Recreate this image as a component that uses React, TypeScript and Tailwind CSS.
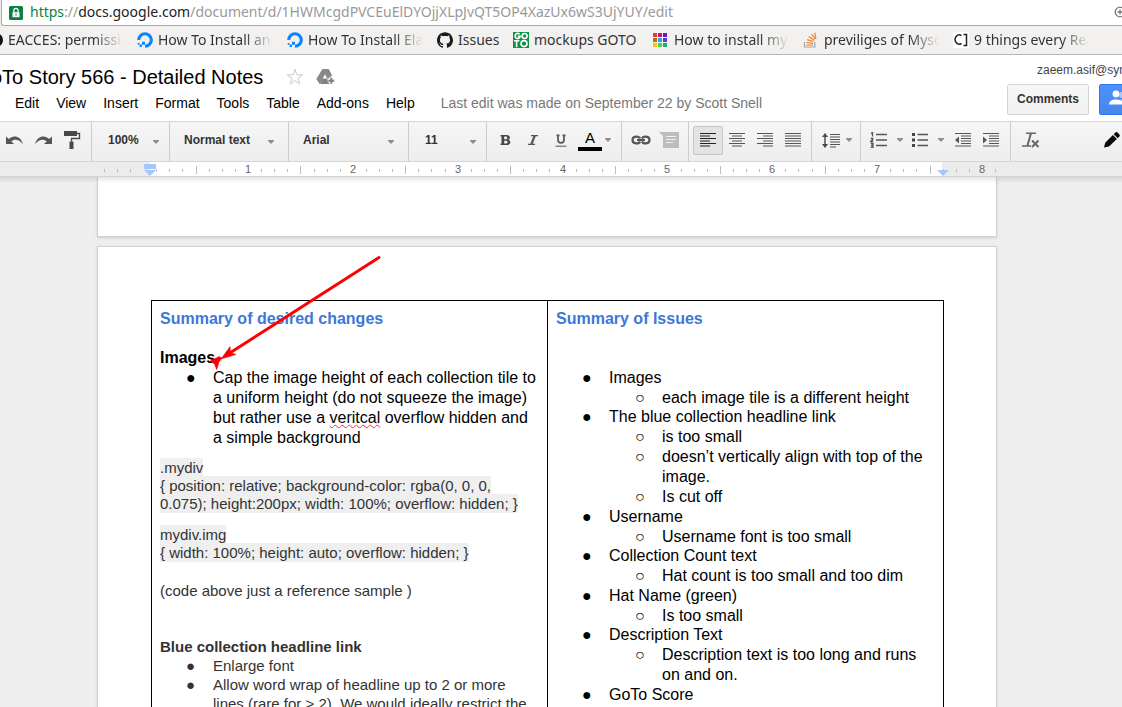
import React, { ReactNode } from "react";
import { SiGithub } from "react-icons/si";

const chromeFont = "font-['Noto_Sans','Open_Sans',sans-serif]";

function Caret() {
  return (
    <svg width="6" height="4" viewBox="0 0 6 4" aria-hidden="true">
      <path d="M0 0h6v1L3 4 0 1z" fill="#8f8f8f" />
    </svg>
  );
}

function OceanIcon() {
  return (
    <svg width="16" height="16" viewBox="0 0 16 16" aria-hidden="true">
      <path d="M1.7 8A6.3 6.3 0 1 1 8 14.3" fill="none" stroke="#0a84ff" strokeWidth="3.1" />
      <path d="M5 9.8h3v3H5zM2.6 12.6h2.3v2.3H2.6zM.7 10.9h1.8v1.8H.7z" fill="#0a84ff" />
    </svg>
  );
}

function GotoIcon() {
  return (
    <svg width="16" height="16" viewBox="0 0 16 16" aria-hidden="true">
      <path d="M0 0h16v16H0z" fill="#0b9444" />
      <g fill="none" stroke="#fff" strokeWidth="1.6">
        <path d="M6.600 2.200A2.600 2.600 0 1 0 7 5.200V4.400H4.800M3.600 8.800v6.400M1 8.800h5.400" />
        <circle cx="11.600" cy="4" r="2.500" />
        <circle cx="11" cy="11.600" r="3" />
      </g>
    </svg>
  );
}

const swatches = ["#e23b3b", "#c9137c", "#7a10c4", "#c56a11", "#2ba3dc", "#4a3fe0", "#fbc314", "#3fd93f", "#0fb572"];

function SwatchIcon() {
  return (
    <svg width="16" height="16" viewBox="0 0 16 16" aria-hidden="true">
      {swatches.map((c, i) => (
        <rect key={c} x={(i % 3) * 5} y={1 + Math.floor(i / 3) * 5} width="4" height="4" fill={c} />
      ))}
    </svg>
  );
}

function StackIcon() {
  return (
    <svg width="16" height="16" viewBox="0 0 16 16" fill="none" aria-hidden="true">
      <path d="M1.500 10v5h10.300v-5" stroke="#a5a6a8" strokeWidth="1.200" />
      <path d="M3.300 13h6.600M3.500 10.500l6.500.8M4.100 7.600l6.300 1.900M5.700 4.500l5.500 3.700M8.400 2l3.900 5.200M11.700.6l1.200 6" stroke="#f48024" strokeWidth="1.200" />
    </svg>
  );
}

function CjIcon() {
  return (
    <svg width="16" height="16" viewBox="0 0 16 16" aria-hidden="true">
      <path d="M0 0h16v16H0z" fill="#fff" />
      <path d="M8.500 3.600A4.200 4.600 0 1 0 8.500 11.500M10.500 2.600h3v10.900h-3" fill="none" stroke="#222" strokeWidth="1.500" />
    </svg>
  );
}

const fade = "w-[115px] [mask-image:linear-gradient(to_right,#000_75%,transparent)]";

function Bookmark({ icon, width, children }: { icon: ReactNode; width: string; children: ReactNode }) {
  return (
    <a href="#" className="flex shrink-0 items-center gap-[5px]">
      {icon}
      <span className={`overflow-hidden whitespace-nowrap ${width}`}>{children}</span>
    </a>
  );
}

function BrowserChrome() {
  return (
    <div className={`shrink-0 text-[#333] ${chromeFont}`}>
      <div className="ml-px flex h-[26px] items-center rounded-bl-[3px] border-b border-l border-[#a9a9a9] bg-white pl-[7px]">
        <svg width="14" height="14" viewBox="0 0 14 14" aria-hidden="true">
          <rect width="14" height="14" rx="1.500" fill="#0b8043" />
          <path d="M3.500 6.200h7v5h-7z" fill="#fff" />
          <path d="M4.900 6.500V4.500a2.100 2.100 0 0 1 4.200 0v2" fill="none" stroke="#fff" strokeWidth="1.300" />
          <path d="M6.500 7.700h1v2h-1z" fill="#0b8043" />
        </svg>
        <p className="ml-[7px] flex-1 overflow-hidden pb-0.5 text-[14px] leading-6 whitespace-nowrap text-[#999]">
          <span className="text-[#0b8043]">https</span>://<span className="text-[#222]">docs.google.com</span>
          /document/d/1HWMcgdPVCEuElDYOjjXLpJvQT5OP4XazUx6wS3UjYUY/edit
        </p>
        <button aria-label="Zoom" className="-mr-1.5 h-6">
          <svg width="14" height="14" viewBox="0 0 14 14" fill="none" stroke="#777" strokeWidth="1.300" aria-hidden="true">
            <circle cx="6" cy="6" r="4.800" />
            <path d="M3.500 6h5M6 3.500v5M9.500 9.500 13 13" />
          </svg>
        </button>
      </div>
      <nav aria-label="Bookmarks" className="flex h-[29px] items-center gap-3.5 overflow-hidden border-b border-[#b6b6b6] bg-[#f2f1f0] text-[14px] leading-6">
        <Bookmark width={fade} icon={
          <svg width="3" height="16" viewBox="0 0 3 16" aria-hidden="true"><circle cx="-4" cy="8" r="7" fill="#111" /></svg>
        }>EACCES: permission</Bookmark>
        <Bookmark width={fade} icon={<OceanIcon />}>How To Install and Use</Bookmark>
        <Bookmark width={fade} icon={<OceanIcon />}>How To Install Elastic</Bookmark>
        <Bookmark width="w-[41px]" icon={<SiGithub size={16} color="#1b1b1b" />}>Issues</Bookmark>
        <Bookmark width="w-[105px]" icon={<GotoIcon />}>mockups GOTO</Bookmark>
        <Bookmark width={fade} icon={<SwatchIcon />}>How to install mysql</Bookmark>
        <Bookmark width={fade} icon={<StackIcon />}>previliges of Mysql</Bookmark>
        <Bookmark width={fade} icon={<CjIcon />}>9 things every React</Bookmark>
      </nav>
    </div>
  );
}

const menus = ["Edit", "View", "Insert", "Format", "Tools", "Table", "Add-ons", "Help"];

function DocHeader() {
  return (
    <header className="flex shrink-0 justify-between overflow-hidden bg-white">
      <div className="h-[66px] whitespace-nowrap">
        <div className="flex h-9 items-end">
          <h1 className="-ml-[9px] text-[20px] leading-7">oTo Story 566 - Detailed Notes</h1>
          <button aria-label="Star" className="mb-[5px] ml-[23px]">
            <svg width="18" height="18" viewBox="0 0 18 18" fill="none" stroke="#ccc" aria-hidden="true">
              <path d="m9 1.200 1.900 5.600h5.900l-4.800 3.500 1.800 5.700L9 12.500 4.200 16 6 10.300 1.200 6.800h5.900z" />
            </svg>
          </button>
          <button aria-label="Add to Drive" className="mb-[5px] ml-3">
            <svg width="20" height="18" viewBox="0 0 20 18" aria-hidden="true">
              <path d="M6.500 1h6l3.200 6-2 2.200-1.500-2.700L9 1.500z M6.100 1.700 9 6.800 3.600 16 .5 11z M7.200 10.300h4.300v1.900h2v3.700H4.300z" fill="#808080" />
              <path d="M6.500 1h6l3.400 6.500-3 3H7.500L4 16 .5 11z" fill="#8a8a8a" />
              <path d="M9 6.300 6.800 10.400h4.400z" fill="#fff" />
              <path d="M15.300 9.300v7M11.800 12.800h7" stroke="#fff" strokeWidth="3.600" />
              <path d="M15.300 9.800v6M12.300 12.800h6" stroke="#808080" strokeWidth="2" />
            </svg>
          </button>
        </div>
        <nav className="flex items-center gap-[17px] pl-[15px] text-[14px] leading-6">
          {menus.map((m) => (
            <button key={m}>{m}</button>
          ))}
          <span className="ml-[9px] text-[#777]">Last edit was made on September 22 by Scott Snell</span>
        </nav>
      </div>
      <div className="w-[115px] shrink-0">
        <p className="ml-[30px] pt-1.5 text-[12px] leading-[18px] whitespace-nowrap text-[#444]">zaeem.asif@syn</p>
        <div className="flex gap-2.5 pt-[5px]">
          <button className="h-[31px] w-[82px] shrink-0 rounded-[2px] border border-[#d4d4d4] bg-linear-to-b from-[#f7f7f7] to-[#f1f1f1] pb-0.5 text-[12px] font-bold text-[#333]">
            Comments
          </button>
          <button aria-label="Share" className="h-[31px] w-20 shrink-0 rounded-[2px] border border-[#3079ed] bg-linear-to-b from-[#4d90fe] to-[#4787ed] pl-2">
            <svg width="28" height="16" viewBox="0 0 28 16" className="-mt-1" aria-hidden="true">
              <g fill="#a9c7fb">
                <circle cx="14" cy="5" r="3" />
                <path d="M9 14c0-3 2-4.500 5-4.500s6 1.500 6 4.500z" />
              </g>
              <circle cx="8" cy="4" r="3.400" fill="#fff" />
              <path d="M1 14.500c0-3.500 3-5 7-5s7 1.500 7 5z" fill="#fff" />
            </svg>
          </button>
        </div>
      </div>
    </header>
  );
}

function Tool({ label, children, active }: { label: string; children: ReactNode; active?: boolean }) {
  return (
    <button
      aria-label={label}
      className={
        active
          ? "flex h-[29px] w-[30px] shrink-0 items-center justify-center rounded-[2px] border border-[#c6c6c6] bg-[#e3e3e3]"
          : "flex h-[29px] w-7 shrink-0 items-center justify-center"
      }
    >
      {children}
    </button>
  );
}

function Picker({ label, value, width, pad, caret }: { label: string; value: string; width: string; pad: string; caret: string }) {
  return (
    <label className={`relative flex shrink-0 items-center border-r border-[#ccc] ${width}`}>
      <select aria-label={label} className={`h-full w-full appearance-none bg-transparent pb-1 text-[12px] font-bold text-[#333] ${pad}`}>
        <option>{value}</option>
      </select>
      <span className={`pointer-events-none absolute top-4 flex h-5 items-start pt-0.5 ${caret}`}>
        <Caret />
      </span>
    </label>
  );
}

function Lines({ d, color = "#555" }: { d: string; color?: string }) {
  return (
    <svg width="16" height="14" viewBox="0 0 16 14" fill="none" stroke={color} strokeWidth="1.200" aria-hidden="true">
      <path d={d} />
    </svg>
  );
}

const section = "flex shrink-0 items-center border-r border-[#ccc] pb-[3px]";

function Toolbar() {
  return (
    <div role="toolbar" className="flex h-[41px] shrink-0 overflow-hidden border-y border-[#d6d6d6] bg-linear-to-b from-[#f6f6f6] to-[#ededed]">
      <div className={`${section} w-[92px] gap-[11px] pl-1.5`}>
        <button aria-label="Undo">
          <svg width="18" height="16" viewBox="0 0 18 16" aria-hidden="true">
            <path d="M0 4.500V12h8L5.200 9.300C8.500 6.500 13 7.200 17 12 14.500 3.500 7 2.800 2.800 7z" fill="#555" />
          </svg>
        </button>
        <button aria-label="Redo">
          <svg width="18" height="16" viewBox="0 0 18 16" aria-hidden="true">
            <path d="M17 4.500V12H9l2.800-2.700C8.500 6.500 4 7.200 0 12 2.500 3.500 10 2.800 14.200 7z" fill="#555" />
          </svg>
        </button>
        <button aria-label="Paint format">
          <svg width="17" height="18" viewBox="0 0 17 18" aria-hidden="true">
            <path d="M0 0h13v5H0zM5.500 10.500h4V18h-4z" fill="#484848" />
            <path d="M13 2.500h2.500v5h-8v3" fill="none" stroke="#484848" strokeWidth="1.300" />
          </svg>
        </button>
      </div>
      <Picker label="Zoom level" value="100%" width="w-[78px]" pad="pl-4" caret="right-[10px]" />
      <Picker label="Paragraph style" value="Normal text" width="w-[119px]" pad="pl-3.5" caret="right-[14px]" />
      <Picker label="Font" value="Arial" width="w-[120px]" pad="pl-3.5" caret="right-[14px]" />
      <Picker label="Font size" value="11" width="w-[78px]" pad="pl-4" caret="right-[10px]" />
      <div className={`${section} w-[135px] pl-1`}>
        <Tool label="Bold">
          <svg width="11" height="12" viewBox="0 0 11 12" aria-hidden="true">
            <path fillRule="evenodd" d="M.5 1h6.200c4 0 4 4.200 1.600 4.800 3 .7 2.700 5.200-1.300 5.200H.5V9.500h1v-7h-1zm3.700 1.600v2.600h1.700c1.800 0 1.800-2.600 0-2.600zm0 4.100v2.800h2c1.900 0 1.900-2.800 0-2.800z" fill="#484848" />
          </svg>
        </Tool>
        <Tool label="Italic">
          <svg width="12" height="12" viewBox="0 0 12 12" fill="none" stroke="#555" aria-hidden="true">
            <path d="M4 1.600h7M1 10.400h7" strokeWidth="1.300" />
            <path d="M7.800 1.500 4.300 10.500" strokeWidth="2.200" />
          </svg>
        </Tool>
        <Tool label="Underline">
          <svg width="12" height="13" viewBox="0 0 12 13" fill="none" stroke="#555" aria-hidden="true">
            <path d="M3 1v5c0 3.700 6 3.700 6 0V1M1.500 1.300h3M7.500 1.300h3" strokeWidth="1.700" />
            <path d="M.5 12.200h11" />
          </svg>
        </Tool>
        <button aria-label="Text color" className="flex w-[30px] flex-col items-center text-[15px] leading-[18px]">
          <span className="w-6 border-b-4 border-black">A</span>
        </button>
        <Caret />
      </div>
      <div className={`${section} w-[67px] pl-[5px]`}>
        <Tool label="Insert link">
          <svg width="20" height="10" viewBox="0 0 20 10" fill="none" stroke="#555" strokeWidth="2.200" aria-hidden="true">
            <path d="M9 3.500C8 1 1.500.5 1.500 5S8 9 9 6.500M11 3.500c1-2.500 7.500-3 7.500 1.500S12 9 11 6.500M6 5h8" />
          </svg>
        </Tool>
        <Tool label="Insert comment">
          <svg width="20" height="16" viewBox="0 0 20 16" aria-hidden="true">
            <path d="M0 0h20v16H4V4z" fill="#bdbdbd" />
            <path d="M7 4.500h10M7 7.500h10M7 10.500h7" stroke="#efefef" />
          </svg>
        </Tool>
      </div>
      <div className={`${section} w-[123px] pl-1`}>
        <Tool label="Align left" active><Lines color="#222" d="M0 .5h16M0 3h10M0 5.500h16M0 8h10M0 10.500h16M0 13h10" /></Tool>
        <Tool label="Align center"><Lines d="M0 .5h16M3 3h10M0 5.500h16M3 8h10M0 10.500h16M3 13h10" /></Tool>
        <Tool label="Align right"><Lines d="M0 .5h16M6 3h10M0 5.500h16M6 8h10M0 10.500h16M6 13h10" /></Tool>
        <Tool label="Justify"><Lines d="M0 .5h16M0 3h16M0 5.500h16M0 8h16M0 10.500h16M0 13h16" /></Tool>
      </div>
      <div className={`${section} w-[49px] gap-1.5 pl-2.5`}>
        <button aria-label="Line spacing">
          <svg width="18" height="15" viewBox="0 0 18 15" aria-hidden="true">
            <path d="M3 0 0 4h2.300v7H0l3 4 3-4H3.700V4H6z" fill="#484848" />
            <path d="M8 1.500h10M8 4h10M8 6.500h10M8 9h10M8 11.500h10M8 14h6" stroke="#555" />
          </svg>
        </button>
        <Caret />
      </div>
      <div className={`${section} w-[150px] pl-[9px]`}>
        <button aria-label="Numbered list">
          <svg width="18" height="16" viewBox="0 0 18 16" fill="none" stroke="#555" aria-hidden="true">
            <path d="M6 2.500h11M6 8h11M6 13.500h11" strokeWidth="1.300" />
            <path d="M1 1.500 2.500.5v4M.7 6.500h2.100v1L.7 9.500h2.500M.7 11.500h2.300v4H.7M1 13.500h2" strokeWidth="1.300" />
          </svg>
        </button>
        <span className="ml-[9px]"><Caret /></span>
        <button aria-label="Bulleted list" className="ml-[9px]">
          <svg width="16" height="16" viewBox="0 0 16 16" aria-hidden="true">
            <path d="M0 1h3v3H0zM0 6.500h3v3H0zM0 12h3v3H0z" fill="#444" />
            <path d="M5.500 2.500H16M5.500 8H16M5.500 13.500H16" stroke="#555" strokeWidth="1.300" />
          </svg>
        </button>
        <span className="ml-2.5"><Caret /></span>
        <span className="ml-[5px] flex">
          <Tool label="Decrease indent">
            <svg width="16" height="14" viewBox="0 0 16 14" aria-hidden="true">
              <path d="M0 .5h16M6 3h10M6 5.500h10M6 8h10M6 10.500h10M0 13h16" stroke="#555" strokeWidth="1.200" />
              <path d="M4 3.500v7L0 7z" fill="#555" />
            </svg>
          </Tool>
          <Tool label="Increase indent">
            <svg width="16" height="14" viewBox="0 0 16 14" aria-hidden="true">
              <path d="M0 .5h16M6 3h10M6 5.500h10M6 8h10M6 10.500h10M0 13h16" stroke="#555" strokeWidth="1.200" />
              <path d="M0 3.500v7L4 7z" fill="#555" />
            </svg>
          </Tool>
        </span>
      </div>
      <div className="flex flex-1 items-center justify-between pb-[3px] pl-1.5">
        <Tool label="Clear formatting">
          <svg width="18" height="16" viewBox="0 0 18 16" fill="none" stroke="#666" aria-hidden="true">
            <path d="M4 1.200h10M0 14h9" strokeWidth="1.500" />
            <path d="M9 1 5.500 13.500" strokeWidth="2" />
            <path d="m10 8.500 6.500 6.500M16.500 8.500 10 15" strokeWidth="2" />
          </svg>
        </Tool>
        <button aria-label="Editing mode" className="mr-0.5">
          <svg width="16" height="16" viewBox="0 0 16 16" aria-hidden="true">
            <path d="M0 15.500 1.200 10.700 8.900 3l4 4L5 14.600zM9.700 2.200 11.400.6c.8-.8 1.500-.6 2.200 0l1.800 1.800c.6.600.6 1.400 0 2L13.700 6.200z" fill="#0a0a0a" />
          </svg>
        </button>
      </div>
    </div>
  );
}

const INCH = 104.85;
const ticks = Array.from({ length: 69 }, (_, i) => i - 11);

function Ruler() {
  return (
    <div className="flex h-[15px] shrink-0 justify-center border-b border-[#d3d3d3] bg-[#ececec] pr-7">
      <svg width="900" height="14" viewBox="0 0 900 14" className="shrink-0" aria-hidden="true">
        <path d="M53 0h792v14H53z" fill="#fff" />
        {ticks.map((i) => {
          const x = Math.round(151 + (i * INCH) / 8);
          if (i % 8 === 0 && i >= 0) {
            return (
              <text key={i} x={x} y="11" textAnchor="middle" fontSize="11" fill="#666">
                {i / 8 + 1}
              </text>
            );
          }
          if (i === -8) return null;
          const tall = Math.abs(i % 8) === 4;
          return <path key={i} d={tall ? `M${x + 0.5} 4v8` : `M${x + 0.5} 7v3`} stroke="#bbb" />;
        })}
        <path d="M47 2h12v5H47zM47 8h12l-6 6z" fill="#a4c6fb" />
        <path d="M840 8h12l-6 6z" fill="#a4c6fb" />
      </svg>
    </div>
  );
}

function Item({ mark, children, tight }: { mark: string; children: ReactNode; tight?: boolean }) {
  return (
    <li className={tight ? "flex odd:-mb-px" : "flex"}>
      <span aria-hidden="true" className="w-[27px] shrink-0">{mark}</span>
      <div>{children}</div>
    </li>
  );
}

const issues: { title: string; notes: string[] }[] = [
  { title: "Images", notes: ["each image tile is a different height"] },
  {
    title: "The blue collection headline link",
    notes: ["is too small", "doesn’t vertically align with top of the image.", "Is cut off"],
  },
  { title: "Username", notes: ["Username font is too small"] },
  { title: "Collection Count text", notes: ["Hat count is too small and too dim"] },
  { title: "Hat Name (green)", notes: ["Is too small"] },
  { title: "Description Text", notes: ["Description text is too long and runs on and on."] },
  { title: "GoTo Score", notes: [] },
];

function Code({ children }: { children: ReactNode }) {
  return (
    <p>
      <span className="bg-[#efefef] box-decoration-clone py-px">{children}</span>
    </p>
  );
}

function Page() {
  return (
    <article className="relative w-[900px] shrink-0 border border-[#d0d0d0] bg-white pt-[53px] pr-[52px] pl-[53px] shadow-sm">
      <table className="w-full table-fixed border-collapse text-left text-[16px] leading-5">
        <tbody>
          <tr className="align-top">
            <td className="border border-black px-2 pt-2">
              <h2 className="font-bold text-[#3c78d8]">Summary of desired changes</h2>
              <h3 className="mt-[19px] font-bold">Images</h3>
              <ul className="pl-[26px]">
                <Item mark="●">
                  Cap the image height of each collection tile to a uniform height (do not squeeze the image) but rather use a{" "}
                  <span className="underline decoration-red-500 decoration-wavy decoration-1 underline-offset-1">veritcal</span> overflow hidden and a simple background
                </Item>
              </ul>
              <div className="mt-[11px] text-[15px] leading-[18px] text-[#333]">
                <Code>.mydiv</Code>
                <Code>{"{ position: relative; background-color: rgba(0, 0, 0, 0.075); height:200px; width: 100%; overflow: hidden; }"}</Code>
                <div className="mt-[13px]">
                  <Code>mydiv.img</Code>
                  <Code>{"{ width: 100%; height: auto; overflow: hidden; }"}</Code>
                </div>
                <p className="mt-5">(code above just a reference sample )</p>
              </div>
              <div className="mt-[37px] pb-10 text-[15px] leading-[19px] text-[#333]">
                <h3 className="font-bold">Blue collection headline link</h3>
                <ul className="pl-[26px]">
                  <Item mark="●">Enlarge font</Item>
                  <Item mark="●">Allow word wrap of headline up to 2 or more lines (rare for &gt; 2). We would ideally restrict the</Item>
                </ul>
              </div>
            </td>
            <td className="border border-black px-2 pt-2">
              <h2 className="font-bold text-[#3c78d8]">Summary of Issues</h2>
              <ul className="mt-[39px] pl-[26px]">
                {issues.map((issue) => (
                  <Item key={issue.title} mark="●" tight>
                    {issue.title}
                    <ul className="pl-[26px]">
                      {issue.notes.map((note) => (
                        <Item key={note} mark="○">{note}</Item>
                      ))}
                    </ul>
                  </Item>
                ))}
              </ul>
            </td>
          </tr>
        </tbody>
      </table>
      <svg width="175" height="120" viewBox="207 253 175 120" className="pointer-events-none absolute top-1.5 left-[109px]" aria-hidden="true">
        <path d="M379 257.500 229 353.500" stroke="#f00" strokeWidth="3" strokeLinecap="round" />
        <path d="M221 359l9-12.500.5 6 5.500 2zM210 361l9-4.500 3 1.500-3 4-2.300 7.700L214.500 364z" fill="#f00" stroke="#f00" strokeWidth=".5" />
      </svg>
    </article>
  );
}

export default function App() {
  return (
    <div className="flex h-screen flex-col overflow-hidden bg-[#eee] font-['Liberation_Sans',Arial,sans-serif] text-black">
      <BrowserChrome />
      <DocHeader />
      <Toolbar />
      <Ruler />
      <main className="relative flex min-h-0 flex-1 flex-col items-center gap-[9px] overflow-hidden pr-7">
        <div className="h-[60px] w-[900px] shrink-0 border border-t-0 border-[#d0d0d0] bg-white shadow-sm" />
        <Page />
        <div className="pointer-events-none absolute inset-x-0 top-0 h-1.5 bg-linear-to-b from-black/10 to-transparent" />
      </main>
    </div>
  );
}
